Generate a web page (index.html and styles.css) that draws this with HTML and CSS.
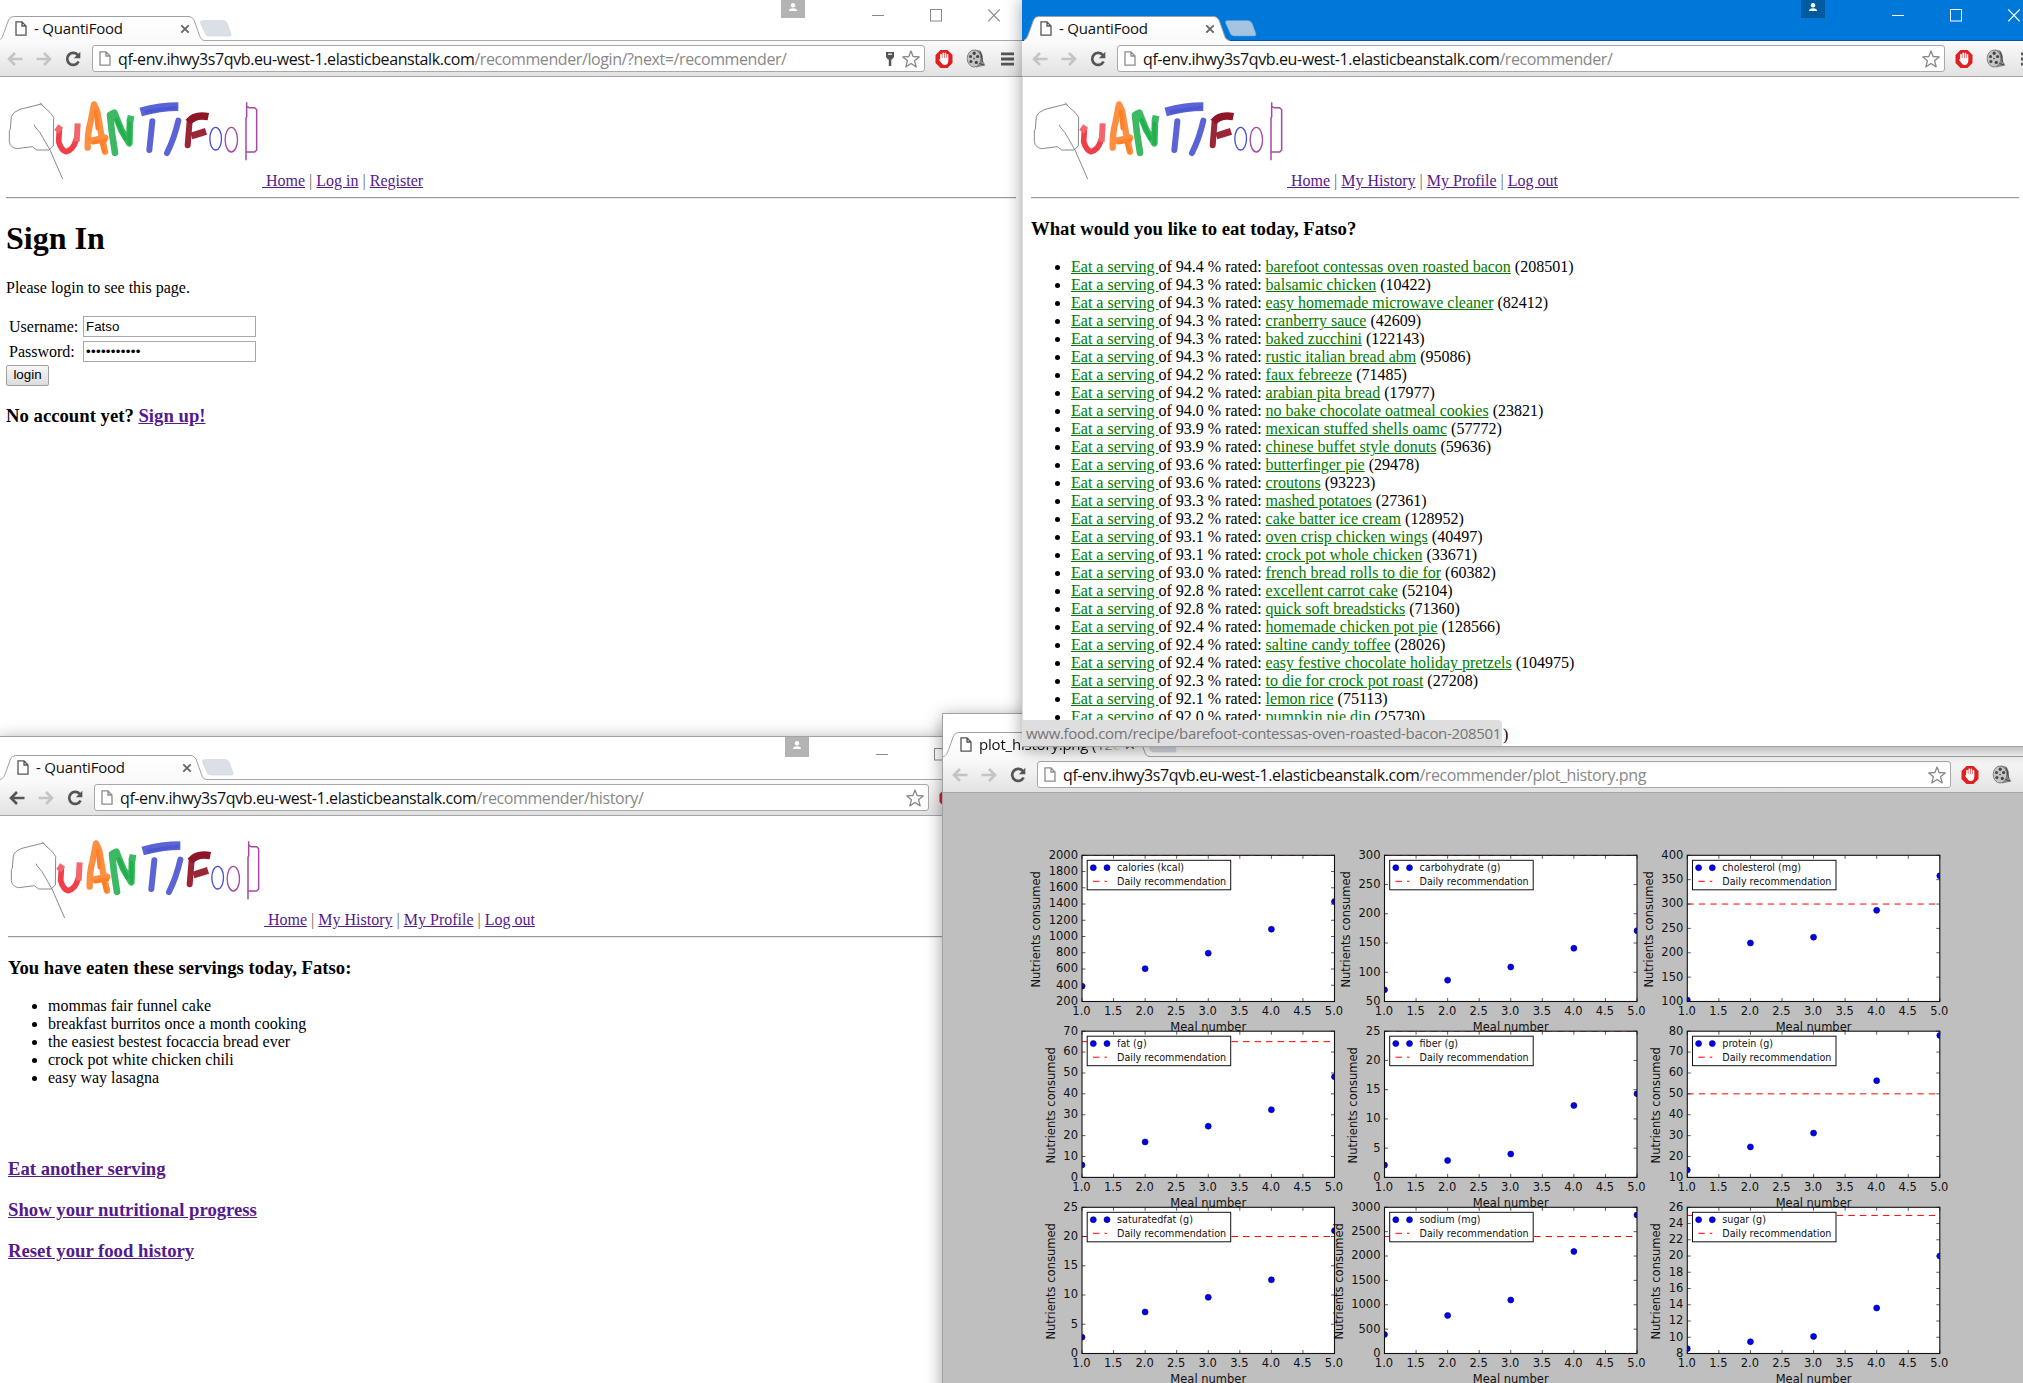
FILE: index.html
```html
<!DOCTYPE html>
<html lang="en">
<head>
<meta charset="utf-8">
<title>QuantiFood</title>
<link rel="stylesheet" href="styles.css">
</head>
<body>
<svg class="defs" aria-hidden="true">
  <defs>
    <linearGradient id="tabfill" x1="0" y1="0" x2="0" y2="1"><stop offset="0" stop-color="#fff"/><stop offset="1" stop-color="#fafafa"/></linearGradient>
    <symbol id="tab" viewBox="0 0 206 25"><path class="tab-shape" d="M-1 24.5C3 23.500 3.500 20 5 16.500L9.500 4Q11 .5 14.500 .5H190Q193 .5 195 4L200.500 19.500Q202 24.500 206 24.500V26H-1Z" fill="url(#tabfill)"/></symbol>
    <symbol id="newtab" viewBox="0 0 34 17"><path d="M3.500 .5H24Q27 .5 28.500 4L32 14Q32.500 16 30.500 16H10Q7 16 6 13L1.500 3Q1 .5 3.500 .5Z"/></symbol>
    <symbol id="file" viewBox="0 0 12 15"><path d="M1 .9H7L11 5V14.100H1Z M7 .9V5H11" fill="#fff" stroke="currentColor" stroke-width="1.300"/></symbol>
    <symbol id="x" viewBox="0 0 10 10"><path d="M1.300 1.300L8.700 8.700M8.700 1.300L1.300 8.700" stroke="#666" stroke-width="1.900"/></symbol>
    <symbol id="back" viewBox="0 0 16 14"><path d="M8 1L2 7L8 13M2 7H15.500" fill="none" stroke="currentColor" stroke-width="2.600"/></symbol>
    <symbol id="forward" viewBox="0 0 16 14"><path d="M8 1L14 7L8 13M14 7H.5" fill="none" stroke="currentColor" stroke-width="2.600"/></symbol>
    <symbol id="reload" viewBox="0 0 16 16"><path d="M13 4.300A6 6 0 1 0 13.600 10.500" fill="none" stroke="#555" stroke-width="2.700"/><path d="M15.300 .8V7.200H8.800Z" fill="#555"/></symbol>
    <symbol id="key" viewBox="0 0 12 16"><path d="M2 1H10V6L8 8.500H4L2 6Z M4.800 8H7.300V15H4.800Z" fill="#555"/><path d="M4 3.200H8" stroke="#eee" stroke-width="1.400"/></symbol>
    <symbol id="star" viewBox="0 0 18 18"><path d="M9 1L11.100 6.500L17.200 6.900L12.500 10.700L14.200 16.900L9 13.500L3.800 16.900L5.500 10.700L.8 6.900L6.900 6.500Z" fill="#fff" stroke="#888" stroke-width="1.300" stroke-linejoin="round"/></symbol>
    <symbol id="abp" viewBox="0 0 18 18"><path d="M5.500 0H12.500L17.500 5V13L12.500 18H5.500L.5 13V5Z" fill="#e01f1f"/><path d="M6 9V4.500M8.200 8V3.200M10.400 8V3.200M12.500 8V4.800" stroke="#fff" stroke-width="1.600" stroke-linecap="round"/><path d="M5.200 8H13.300V11Q12.800 14.800 9.800 15Q7.500 15 6 12.500L4 9.800Q4.500 8.800 5.600 10Z" fill="#fff"/></symbol>
    <symbol id="film" viewBox="0 0 20 19"><path d="M9 .5L14 1.500Q17.500 5 17 12L19.500 16.500L10 18.500Z" fill="#8a8a8a"/><ellipse cx="8" cy="9.500" rx="6.800" ry="8.500" fill="#c4c4c4" stroke="#777" stroke-width=".9"/><g fill="#444"><ellipse cx="8.200" cy="4.300" rx="1.600" ry="1.700"/><circle cx="4.500" cy="7.600" r="1.500"/><circle cx="11.600" cy="7.500" r="1.600"/><circle cx="4.900" cy="12.600" r="1.500"/><circle cx="10.300" cy="13.400" r="1.600"/><circle cx="8" cy="9.600" r=".8"/></g><path d="M14 2.500L16 8M15.500 8L16.500 13M13.500 14.500L18 16" stroke="#444" stroke-width="1"/></symbol>
    <symbol id="menu" viewBox="0 0 13 14"><path d="M0 1.800H13M0 7H13M0 12.200H13" stroke="#555" stroke-width="2.800"/></symbol>
    <symbol id="person" viewBox="0 0 24 18"><circle cx="12" cy="5.300" r="2.200" fill="#fff"/><path d="M8 11Q8 8.300 12 8.300T16 11Z" fill="#fff"/></symbol>
    <symbol id="minimise" viewBox="0 0 12 13"><path d="M0 6.500H12" stroke="currentColor"/></symbol>
    <symbol id="maximise" viewBox="0 0 12 13"><rect x=".5" y=".5" width="11" height="11.500" fill="none" stroke="currentColor"/></symbol>
    <symbol id="close" viewBox="0 0 12 13"><path d="M.3 .5L11.700 12.300M11.700 .5L.3 12.300" stroke="currentColor" stroke-width="1.100"/></symbol>
    <symbol id="logo" viewBox="18 255 768 303">
      <g fill="none" stroke-linejoin="round">
        <path stroke="#777" stroke-width="2.600" d="M120 308L128 316M124 312L60 328Q38 336 34 350L31 387L28 392V425Q31 443 50 446L97 440L110 450H147L160 438L161 352L150 337L124 314M103 374L105 380L120 398L150 450L188 537"/>
        <g stroke-linecap="round">
          <path stroke="#ef4049" stroke-width="17" d="M178 390L176 425Q184 452 198 455Q220 450 228 420"/>
          <path stroke="#ff8f40" stroke-width="19" d="M263 443Q262 400 272 365L282 313L292 335L303 400L315 455M264 424L316 413"/>
          <path stroke="#ff7f27" stroke-width="11" d="M280 428L316 422M287 335L292 385M305 430L312 455"/>
          <path stroke="#3cb962" stroke-width="20" d="M345 458L336 400L330 345L343 338L364 390L388 430L390 360"/>
          <path stroke="#22b04c" stroke-width="12" d="M350 360L375 415M388 370V430"/>
          <path stroke="#5a64d6" stroke-width="18" d="M457 364L448 450M535 362Q523 415 501 459"/>
          <path stroke="#9b2638" stroke-width="18" d="M569 362L563 436"/>
        </g>
        <path stroke="#f4666c" stroke-width="18" d="M230 425L233 370M170 395L182 378"/>
        <path stroke="#3cb962" stroke-width="20" d="M390 365L393 347"/>
        <path stroke="#5a64d6" stroke-width="26" d="M422 336Q480 320 535 320"/>
        <path stroke="#4c57d0" stroke-width="10" d="M435 336Q480 328 530 322"/>
        <path stroke="#8f1529" stroke-width="22" d="M565 366Q585 342 625 350"/>
        <path stroke="#9b2638" stroke-width="21" d="M574 408L618 394"/>
        <ellipse stroke="#4450cf" stroke-width="4" cx="647" cy="416" rx="17.500" ry="34"/>
        <ellipse stroke="#a349a4" stroke-width="4" cx="694" cy="419" rx="18.500" ry="37"/>
        <path stroke="#a349a4" stroke-width="4.500" d="M740 307V350L738 355V481M742 320L747 323H764L770 329V450L764 456H740"/>
      </g>
    </symbol>
  </defs>
</svg>

<section class="window win-login">
  <header class="titlebar">
    <div class="tab"><svg class="tab-bg"><use href="#tab"/></svg><svg class="tab-icon"><use href="#file"/></svg><span class="tab-title">- QuantiFood</span><svg class="tab-x"><use href="#x"/></svg></div>
    <svg class="newtab"><use href="#newtab"/></svg>
    <div class="controls"><svg class="person"><use href="#person"/></svg><svg class="ctl"><use href="#minimise"/></svg><svg class="ctl"><use href="#maximise"/></svg><svg class="ctl"><use href="#close"/></svg></div>
  </header>
  <div class="toolbar">
    <svg class="nav off"><use href="#back"/></svg><svg class="nav off"><use href="#forward"/></svg><svg class="reload"><use href="#reload"/></svg>
    <div class="omnibox"><svg class="url-icon"><use href="#file"/></svg><span class="url"><b class="host">qf-env.ihwy3s7qvb.eu-west-1.elasticbeanstalk.com</b>/recommender/login/?next=/recommender/</span><svg class="key"><use href="#key"/></svg><svg class="star"><use href="#star"/></svg></div>
    <svg class="abp"><use href="#abp"/></svg><svg class="film"><use href="#film"/></svg><svg class="menu"><use href="#menu"/></svg>
  </div>
  <main class="page">
    <div class="sitenav"><svg class="logo"><use href="#logo"/></svg><a>&nbsp;Home</a> | <a>Log in</a> | <a>Register</a></div>
    <hr>
    <h1>Sign In</h1>
    <p>Please login to see this page.</p>
    <form class="login">
      <label>Username:</label><span class="field">Fatso</span>
      <label>Password:</label><span class="field dots">•••••••••••</span>
    </form>
    <div class="button">login</div>
    <h3>No account yet? <a>Sign up!</a></h3>
  </main>
</section>

<section class="window win-history">
  <header class="titlebar">
    <div class="tab"><svg class="tab-bg"><use href="#tab"/></svg><svg class="tab-icon"><use href="#file"/></svg><span class="tab-title">- QuantiFood</span><svg class="tab-x"><use href="#x"/></svg></div>
    <svg class="newtab"><use href="#newtab"/></svg>
    <div class="controls"><svg class="person"><use href="#person"/></svg><svg class="ctl"><use href="#minimise"/></svg><svg class="ctl"><use href="#maximise"/></svg><svg class="ctl"><use href="#close"/></svg></div>
  </header>
  <div class="toolbar">
    <svg class="nav"><use href="#back"/></svg><svg class="nav off"><use href="#forward"/></svg><svg class="reload"><use href="#reload"/></svg>
    <div class="omnibox"><svg class="url-icon"><use href="#file"/></svg><span class="url"><b class="host">qf-env.ihwy3s7qvb.eu-west-1.elasticbeanstalk.com</b>/recommender/history/</span><svg class="star"><use href="#star"/></svg></div>
    <svg class="abp"><use href="#abp"/></svg><svg class="film"><use href="#film"/></svg><svg class="menu"><use href="#menu"/></svg>
  </div>
  <main class="page">
    <div class="sitenav"><svg class="logo"><use href="#logo"/></svg><a>&nbsp;Home</a> | <a>My History</a> | <a>My Profile</a> | <a>Log out</a></div>
    <hr>
    <h3>You have eaten these servings today, Fatso:</h3>
    <ul>
      <li>mommas fair funnel cake</li>
      <li>breakfast burritos once a month cooking</li>
      <li>the easiest bestest focaccia bread ever</li>
      <li>crock pot white chicken chili</li>
      <li>easy way lasagna</li>
    </ul>
    <nav class="actions">
      <h3><a>Eat another serving</a></h3>
      <h3><a>Show your nutritional progress</a></h3>
      <h3><a>Reset your food history</a></h3>
    </nav>
  </main>
</section>

<section class="window win-plot">
  <header class="titlebar">
    <div class="tab"><svg class="tab-bg"><use href="#tab"/></svg><svg class="tab-icon"><use href="#file"/></svg><span class="tab-title fade">plot_history.png (1280×</span><svg class="tab-x"><use href="#x"/></svg></div>
    <svg class="newtab"><use href="#newtab"/></svg>
  </header>
  <div class="toolbar">
    <svg class="nav off"><use href="#back"/></svg><svg class="nav off"><use href="#forward"/></svg><svg class="reload"><use href="#reload"/></svg>
    <div class="omnibox"><svg class="url-icon"><use href="#file"/></svg><span class="url"><b class="host">qf-env.ihwy3s7qvb.eu-west-1.elasticbeanstalk.com</b>/recommender/plot_history.png</span><svg class="star"><use href="#star"/></svg></div>
    <svg class="abp"><use href="#abp"/></svg><svg class="film"><use href="#film"/></svg><svg class="menu"><use href="#menu"/></svg>
  </div>
  <main class="figure"><svg id="plots" width="1100" height="590" viewBox="943 793 1100 590"></svg></main>
</section>

<section class="window active win-recommend">
  <header class="titlebar">
    <div class="tab"><svg class="tab-bg"><use href="#tab"/></svg><svg class="tab-icon"><use href="#file"/></svg><span class="tab-title">- QuantiFood</span><svg class="tab-x"><use href="#x"/></svg></div>
    <svg class="newtab"><use href="#newtab"/></svg>
    <div class="controls"><svg class="person"><use href="#person"/></svg><svg class="ctl"><use href="#minimise"/></svg><svg class="ctl"><use href="#maximise"/></svg><svg class="ctl"><use href="#close"/></svg></div>
  </header>
  <div class="toolbar">
    <svg class="nav off"><use href="#back"/></svg><svg class="nav off"><use href="#forward"/></svg><svg class="reload"><use href="#reload"/></svg>
    <div class="omnibox"><svg class="url-icon"><use href="#file"/></svg><span class="url"><b class="host">qf-env.ihwy3s7qvb.eu-west-1.elasticbeanstalk.com</b>/recommender/</span><svg class="star"><use href="#star"/></svg></div>
    <svg class="abp"><use href="#abp"/></svg><svg class="film"><use href="#film"/></svg><svg class="menu"><use href="#menu"/></svg>
  </div>
  <main class="page">
    <div class="sitenav"><svg class="logo"><use href="#logo"/></svg><a>&nbsp;Home</a> | <a>My History</a> | <a>My Profile</a> | <a>Log out</a></div>
    <hr>
    <h3>What would you like to eat today, Fatso?</h3>
    <ul id="recipes"></ul>
  </main>
  <div class="status">www.food.com/recipe/barefoot-contessas-oven-roasted-bacon-208501</div>
</section>
<script src="app.js"></script>
</body>
</html>
```
FILE: styles.css
```css
body {
  margin: 0;
  width: 2023px;
  height: 1383px;
  position: relative;
  overflow: hidden;
  background: #fff;
  font: 16px/18px "Liberation Serif", "Times New Roman", serif;
  color: #000;
}
.defs { position: absolute; width: 0; height: 0; }

/* windows on the desktop */
.window {
  position: absolute;
  box-sizing: border-box;
  display: flex;
  flex-direction: column;
  overflow: hidden;
  border: 1px solid #a2a2a2;
  background: #fff;
  box-shadow: 0 3px 16px rgba(0, 0, 0, .38);
}
.win-login { left: -3px; top: -3px; width: 1028px; height: 742px; }
.win-history { left: -1px; top: 736px; width: 1030px; height: 700px; }
.win-plot { left: 942px; top: 713px; width: 1109px; height: 720px; }
.win-recommend { left: 1022px; top: -3px; width: 1023px; height: 750px; border-left: 0; }

.titlebar {
  display: flex;
  height: 42px;
  flex: none;
  border-bottom: 1px solid #a8a8a8;
  color: #8a8a8a;
}
.active .titlebar { background: #0078d9; border-color: #0058a3; color: #fff; padding-left: 1px; }
.tab {
  width: 206px;
  height: 25px;
  margin: 18px 0 0 1px;
  display: flex;
  align-items: center;
  position: relative;
}
.tab-bg { position: absolute; left: 0; top: 0; width: 206px; height: 25px; }
.tab-shape { stroke: #a0a0a0; }
.active .tab-shape { stroke: #0058a3; }
.tab-icon { width: 12px; height: 15px; margin: -1px 0 0 16px; color: #555; position: relative; }
.tab-title {
  position: relative;
  flex: 1;
  margin: -2px 0 0 7px;
  font: 15px/20px "Open Sans", "Noto Sans", sans-serif;
  letter-spacing: -.2px;
  color: #111;
  white-space: nowrap;
  overflow: hidden;
}
.fade { -webkit-mask-image: linear-gradient(90deg, #000 80%, transparent); mask-image: linear-gradient(90deg, #000 80%, transparent); }
.tab-x { width: 10px; height: 10px; margin: 0 15px 0 4px; position: relative; }
.newtab { width: 34px; height: 17px; margin: 22px 0 0 -6px; fill: #dbe0e7; stroke: #d0d4da; stroke-width: .6px; }
.active .newtab { fill: #a4c4e2; stroke: #5e9ace; }
.controls { display: flex; margin-left: auto; padding-right: 24px; }
.person { width: 24px; height: 18px; margin: 2px 67px 0 0; background: #b3b3b3; }
.win-history .person { margin-top: 0; height: 20px; }
.active .person { background: #005a9e; }
.ctl { width: 12px; height: 13px; margin: 11px 0 0 46px; }
.person + .ctl { margin-left: 0; }

.toolbar {
  height: 35px;
  flex: none;
  display: flex;
  align-items: center;
  background: linear-gradient(#fbfbfb, #e2e2e2);
  border-bottom: 1px solid #a6a6a6;
}
.active .toolbar { padding-left: 1px; }
.nav { width: 16px; height: 14px; margin-left: 13px; color: #555; }
.nav:first-child { margin-left: 9px; }
.off { color: #c4c4c4; }
.reload { width: 16px; height: 16px; margin-left: 13px; }
.omnibox {
  flex: 1;
  box-sizing: border-box;
  height: 27px;
  margin: 0 10px 0 11px;
  display: flex;
  align-items: center;
  border: 1px solid #a9a9a9;
  border-radius: 3px;
  background: #fff;
}
.url-icon { width: 12px; height: 15px; margin-left: 6px; color: #8c8c8c; }
.url {
  flex: 1;
  margin-left: 7px;
  font: 16px/22px "Open Sans", "Noto Sans", sans-serif;
  letter-spacing: -.405px;
  color: #888;
  white-space: nowrap;
}
.host { font-weight: 400; color: #111; }
.key { width: 12px; height: 16px; margin-right: 6px; }
.star { width: 18px; height: 18px; margin-right: 4px; }
.abp { width: 18px; height: 18px; }
.film { width: 20px; height: 19px; margin-left: 13px; }
.menu { width: 13px; height: 14px; margin: 0 10px 0 15px; }

/* site pages */
.page { padding: 8px; flex: 1; }
.win-recommend .page { padding: 8px 25px 8px 9px; box-shadow: inset 1px 0 #ddd; }
.sitenav { height: 105px; line-height: 18px; white-space: nowrap; }
.logo { width: 256px; height: 101px; vertical-align: baseline; }
.sitenav { color: #666; }
a { color: #551a8b; text-decoration: underline; }
hr { margin: 7px 0 8px; border: 0; border-top: 1px solid #999; border-bottom: 1px solid #eaeaea; }
h1 { margin: 21px 0; font-size: 32px; line-height: 37px; }
h3 { margin: 18.720px 0; font-size: 18.720px; line-height: 22px; }
p { margin: 22px 0 17px; }
ul { margin: 16px 0; padding-left: 40px; }
.login {
  display: grid;
  grid-template-columns: 72px 173px;
  grid-auto-rows: 21px;
  gap: 4px 2px;
  padding: 2px 3px;
  line-height: 21px;
}
.field {
  box-sizing: border-box;
  height: 21px;
  border: 1px solid #a9a9a9;
  padding-left: 2px;
  font: 13.330px/19px "Liberation Sans", Arial, sans-serif;
}
.dots { letter-spacing: .3px; }
.button {
  box-sizing: border-box;
  width: 43px;
  height: 21px;
  margin-top: 1px;
  border: 1px solid #a0a0a0;
  border-radius: 2px;
  background: linear-gradient(#f6f6f6, #dcdcdc);
  font: 13.330px/18px "Liberation Sans", Arial, sans-serif;
  text-align: center;
}
#recipes a { color: #007a00; }
.tail { padding-left: 432px; }
.actions { margin-top: 71px; }

.status {
  position: absolute;
  left: 0;
  bottom: 0;
  width: 480px;
  height: 26px;
  border-radius: 0 4px 0 0;
  background: #dedede;
  padding-left: 4px;
  box-sizing: border-box;
  font: 15px/27px "Open Sans", "Noto Sans", sans-serif;
  letter-spacing: -.31px;
  color: #757575;
  white-space: nowrap;
}

/* nutrient plots */
.figure { flex: 1; background: #bfbfbf; }
#plots { display: block; font-family: "DejaVu Sans", sans-serif; }
#plots .tick-label, #plots .axis-label { font-size: 11.500px; fill: #111; }
#plots .key-label { font-size: 9.600px; fill: #111; }
#plots .frame { fill: none; stroke: #111; stroke-width: 1.100px; }
#plots .area { fill: #fff; }
#plots .tick { stroke: #333; stroke-width: .8px; }
#plots .goal { stroke: #f00; stroke-width: 1px; stroke-dasharray: 6.500 5; }
#plots .dot { fill: #0000f5; stroke: #000060; stroke-width: .6px; }
#plots .legend { fill: #fff; stroke: #111; stroke-width: 1px; }
```
FILE: app.js
```js
const recipes = [
  ["94.4", "barefoot contessas oven roasted bacon", 208501],
  ["94.3", "balsamic chicken", 10422],
  ["94.3", "easy homemade microwave cleaner", 82412],
  ["94.3", "cranberry sauce", 42609],
  ["94.3", "baked zucchini", 122143],
  ["94.3", "rustic italian bread abm", 95086],
  ["94.2", "faux febreeze", 71485],
  ["94.2", "arabian pita bread", 17977],
  ["94.0", "no bake chocolate oatmeal cookies", 23821],
  ["93.9", "mexican stuffed shells oamc", 57772],
  ["93.9", "chinese buffet style donuts", 59636],
  ["93.6", "butterfinger pie", 29478],
  ["93.6", "croutons", 93223],
  ["93.3", "mashed potatoes", 27361],
  ["93.2", "cake batter ice cream", 128952],
  ["93.1", "oven crisp chicken wings", 40497],
  ["93.1", "crock pot whole chicken", 33671],
  ["93.0", "french bread rolls to die for", 60382],
  ["92.8", "excellent carrot cake", 52104],
  ["92.8", "quick soft breadsticks", 71360],
  ["92.4", "homemade chicken pot pie", 128566],
  ["92.4", "saltine candy toffee", 28026],
  ["92.4", "easy festive chocolate holiday pretzels", 104975],
  ["92.3", "to die for crock pot roast", 27208],
  ["92.1", "lemon rice", 75113],
  ["92.0", "pumpkin pie dip", 25730]
];
document.getElementById("recipes").innerHTML = recipes.map(([score, name, id]) =>
  `<li><a>Eat a serving&nbsp;</a>of ${score} % rated: <a>${name}</a> (${id})</li>`
).join("") + '<li class="tail">)</li>';

// name, low, high, step, daily recommendation, values per meal
const charts = [
  ["calories (kcal)", 200, 2000, 200, 2000, [389, 604, 795, 1090, 1430]],
  ["carbohydrate (g)", 50, 300, 50, 300, [70, 86.5, 109, 141, 171]],
  ["cholesterol (mg)", 100, 400, 50, 300, [103, 220, 232, 287, 358]],
  ["fat (g)", 0, 70, 10, 65, [5.9, 17, 24.5, 32.4, 48.2]],
  ["fiber (g)", 0, 25, 5, 25, [2.1, 2.9, 4, 12.3, 14.3]],
  ["protein (g)", 10, 80, 10, 50, [13.5, 24.6, 31.2, 56.3, 78]],
  ["saturatedfat (g)", 0, 25, 5, 20, [2.8, 7.1, 9.6, 12.6, 21]],
  ["sodium (mg)", 0, 3000, 500, 2400, [391, 780, 1098, 2094, 2842]],
  ["sugar (g)", 8, 26, 2, 25, [8.6, 9.45, 10.1, 13.6, 20]]
];
const lefts = [1082, 1384.5, 1687.3];
const tops = [855.3, 1031.2, 1207.3];
const W = 252.5, H = 146.2;
let out = "";
charts.forEach(([name, lo, hi, step, goal, values], i) => {
  const l = lefts[i % 3], t = tops[Math.floor(i / 3)], r = l + W, b = t + H;
  const y = v => b - (v - lo) / (hi - lo) * H;
  out += `<clipPath id="c${i}"><rect x="${l}" y="${t}" width="${W}" height="${H}"/></clipPath>`;
  out += `<rect class="area" x="${l}" y="${t}" width="${W}" height="${H}"/>`;
  out += `<g clip-path="url(#c${i})"><path class="goal" d="M${l} ${y(goal)}H${r}"/>`;
  values.forEach((v, k) => { out += `<circle class="dot" cx="${l + W * k / 4}" cy="${y(v)}" r="3"/>`; });
  out += "</g>";
  for (let k = 0; k <= 8; k++) {
    const x = l + W * k / 8;
    out += `<path class="tick" d="M${x} ${t}v3.500M${x} ${b}v-3.500"/>`;
    out += `<text class="tick-label" text-anchor="middle" x="${x - .5}" y="${b + 13.4}">${(1 + k / 2).toFixed(1)}</text>`;
  }
  for (let v = lo; v <= hi; v += step) {
    out += `<path class="tick" d="M${l} ${y(v)}h3.500M${r} ${y(v)}h-3.500"/>`;
    out += `<text class="tick-label" text-anchor="end" x="${l - 4}" y="${y(v) + 3.4}">${v}</text>`;
  }
  out += `<rect class="frame" x="${l}" y="${t}" width="${W}" height="${H}"/>`;
  const ax = l - 12.6 - 7.35 * String(hi).length, ay = t + H / 2 + 1;
  out += `<text class="axis-label" text-anchor="middle" transform="translate(${ax} ${ay}) rotate(-90)">Nutrients consumed</text>`;
  out += `<text class="axis-label" text-anchor="middle" x="${l + W / 2}" y="${b + 29.2}">Meal number</text>`;
  out += `<rect class="legend" x="${l + 5.2}" y="${t + 5}" width="143.500" height="29.500"/>`;
  out += `<circle class="dot" cx="${l + 11.3}" cy="${t + 12.4}" r="3"/><circle class="dot" cx="${l + 25}" cy="${t + 12.4}" r="3"/>`;
  out += `<path class="goal" d="M${l + 11} ${t + 26}h14"/>`;
  out += `<text class="key-label" x="${l + 35}" y="${t + 15.7}">${name}</text><text class="key-label" x="${l + 35}" y="${t + 29.3}">Daily recommendation</text>`;
});
document.getElementById("plots").innerHTML = out;
```
